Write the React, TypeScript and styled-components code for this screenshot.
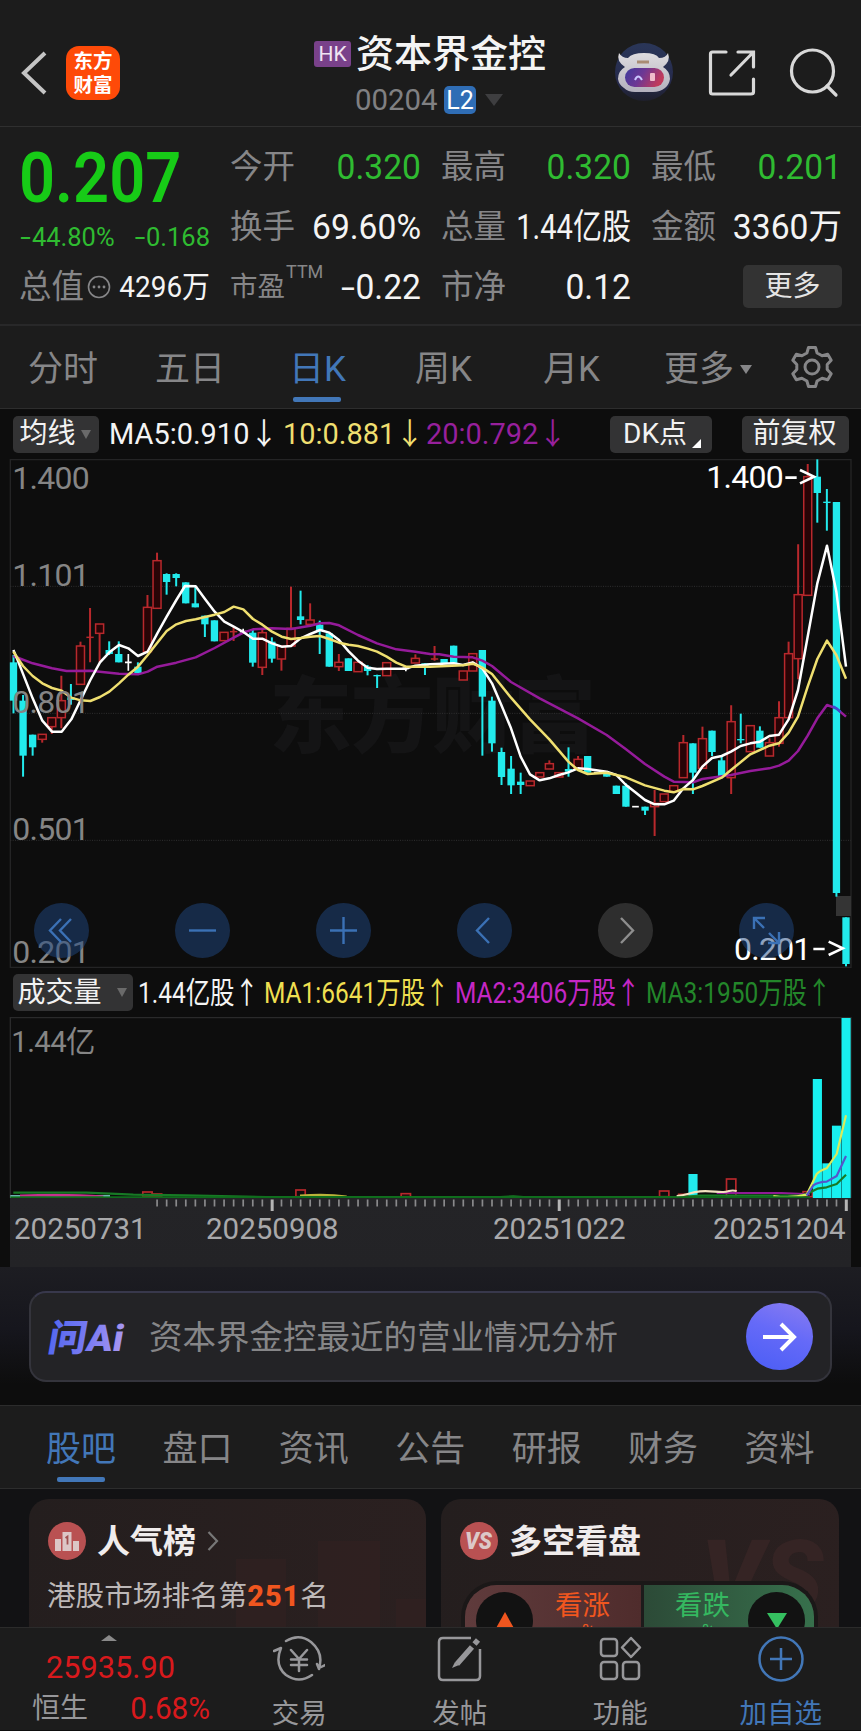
import React from "react";
import styled, { createGlobalStyle } from "styled-components";

const Global = createGlobalStyle`
  * { box-sizing: border-box; }
  html, body { margin: 0; padding: 0; background: #0d0d0d; }
  body { font-family: Roboto, "Noto Sans CJK SC", sans-serif; overflow: hidden; }
`;

const GREEN = "#17cb17";
const GREY = "#868688";
const CYAN = "#22eaec";
const RED = "#b8282c";
const BLUE = "#4277b8";

const Page = styled.div`
  width: 861px;
  height: 1731px;
  overflow: hidden;
  display: flex;
  flex-direction: column;
  background: #0d0d0d;
  color: #f4f4f4;
`;

/* Text drawn at a given width: the glyphs are narrowed horizontally */
const Fit = styled.span<{ $w?: number; $s?: number; $size: number; $color?: string; $weight?: number; $right?: boolean }>`
  display: flex;
  flex: none;
  justify-content: ${(p) => (p.$right ? "flex-end" : "flex-start")};
  width: ${(p) => (p.$w ? p.$w + "px" : "auto")};
  white-space: nowrap;
  line-height: 1;
  font-size: ${(p) => p.$size}px;
  font-weight: ${(p) => p.$weight ?? 400};
  color: ${(p) => p.$color ?? "inherit"};
  transform: scaleX(${(p) => p.$s ?? 1});
  transform-origin: ${(p) => (p.$right ? "right" : "left")} center;
`;
const Minus = styled.span`
  display: inline-block;
  transform: scaleX(1.5);
  margin: 0 3px;
`;

/* ---------- header ---------- */
const Header = styled.header`
  height: 127px;
  flex: none;
  display: flex;
  align-items: flex-start;
  background: #1c1c1c;
  border-bottom: 1px solid #2f2f2f;
  padding: 33px 20px 0 20px;
`;
const HeadLeft = styled.div`
  width: 294px;
  display: flex;
  gap: 18px;
  padding-top: 13px;
`;
const BrandMark = styled.div`
  width: 54px;
  height: 54px;
  border-radius: 13px;
  background: #fe4a08;
  color: #fff;
  display: flex;
  flex-direction: column;
  align-items: center;
  gap: 4px;
  font: 700 19.5px/20px "Noto Sans CJK SC", sans-serif;
  padding-top: 4px;
`;
const TitleBlock = styled.div`
  width: 290px;
`;
const TitleRow = styled.div`
  display: flex;
  align-items: center;
  gap: 5px;
  height: 40px;
  padding-top: 1px;
`;
const Market = styled.span`
  width: 37px;
  height: 26px;
  border-radius: 3px;
  background: #79418a;
  font-size: 21px;
  line-height: 27px;
  text-align: center;
  color: #efe4f2;
`;
const CodeRow = styled.div`
  display: flex;
  align-items: center;
  height: 30px;
  margin: 12px 0 0 41px;
`;
const Level = styled.span`
  width: 32px;
  height: 28px;
  margin: 0 9px 0 6px;
  border-radius: 5px;
  background: #2f6db5;
  font-size: 25px;
  line-height: 29px;
  text-align: center;
  color: #fff;
`;
const Down = styled.i<{ $w: number; $h: number; $c: string }>`
  flex: none;
  border-style: solid;
  border-color: ${(p) => p.$c} transparent transparent;
  border-width: ${(p) => `${p.$h}px ${p.$w / 2}px 0`};
`;
const HeadIcons = styled.div`
  display: flex;
  align-items: center;
  padding-top: 9px;
  gap: 33px;
  margin-left: 9px;
`;

/* ---------- quote ---------- */
const Quote = styled.section`
  height: 199px;
  flex: none;
  display: grid;
  grid-template-columns: 190px 190px 189px 190px;
  column-gap: 21px;
  padding: 10px 20px 8px;
  background: #1c1c1c;
  border-bottom: 2px solid #282829;
`;
const QuoteCol = styled.div`
  display: flex;
  flex-direction: column;
  margin-left: -1px;
`;
const Cell = styled.div`
  height: 60px;
  display: flex;
  align-items: center;
  justify-content: space-between;
`;
const PriceBox = styled.div`
  height: 80px;
  padding-top: 5px;
`;
const ChangeRow = styled.div`
  height: 40px;
  display: flex;
  align-items: center;
  justify-content: space-between;
`;
const Sup = styled.sup`
  font-size: 18px;
  line-height: 1;
  color: ${GREY};
  align-self: flex-start;
  margin: 6px auto 0 1px;
`;
const MoreButton = styled.button`
  width: 99px;
  height: 43px;
  margin: -2px 0 0 auto;
  border: 0;
  border-radius: 5px;
  background: #333;
  color: #e4e4e4;
  font: 400 28px/37px "Noto Sans CJK SC", sans-serif;
  padding: 0 0 4px;
`;

/* ---------- period tabs ---------- */
const Periods = styled.nav`
  height: 83px;
  flex: none;
  display: flex;
  align-items: stretch;
  background: #1c1c1c;
  border-bottom: 1px solid #2d2d2d;
  padding-left: 28px;
`;
const Tab = styled.div<{ $w: number; $on?: boolean }>`
  width: ${(p) => p.$w}px;
  display: flex;
  align-items: center;
  gap: 6px;
  padding-top: 4px;
  font-size: 35px;
  line-height: 1;
  white-space: nowrap;
  color: ${(p) => (p.$on ? BLUE : GREY)};
`;
const Settings = styled.div`
  display: flex;
  align-items: center;
`;
const TabLabel = styled.span<{ $on?: boolean }>`
  position: relative;
  &::after {
    content: "";
    display: ${(p) => (p.$on ? "block" : "none")};
    position: absolute;
    width: 48px;
    height: 5px;
    border-radius: 2px;
    background: ${BLUE};
    left: calc(50% - 24px);
    top: 45px;
  }
`;

/* ---------- legends and charts ---------- */
const Legend = styled.div<{ $h: number }>`
  height: ${(p) => p.$h}px;
  flex: none;
  display: flex;
  align-items: center;
  padding: 0 12px 0 13px;
`;
const Chip = styled.button<{ $w: number }>`
  width: ${(p) => p.$w}px;
  height: 37px;
  flex: none;
  display: flex;
  align-items: center;
  justify-content: center;
  gap: 5px;
  border: 0;
  border-radius: 5px;
  background: #333334;
  color: #f2f2f2;
  padding: 0 2px 0 0;
  font: 400 28px/1 Roboto, "Noto Sans CJK SC", sans-serif;
`;
const Corner = styled.i`
  align-self: flex-end;
  margin: 0 -4px 5px 0;
  border-style: solid;
  border-width: 0 0 9px 9px;
  border-color: transparent transparent #fff;
`;
const Space = styled.span<{ $w: number }>`
  flex: none;
  width: ${(p) => p.$w}px;
`;
const ChartBox = styled.div<{ $h: number }>`
  position: relative;
  height: ${(p) => p.$h}px;
  flex: none;
  svg { display: block; }
`;
const Tools = styled.div`
  position: absolute;
  left: 34px;
  top: 444px;
  display: flex;
  gap: 86px;
`;
const Tool = styled.div<{ $off?: boolean }>`
  width: 55px;
  height: 55px;
  border-radius: 50%;
  background: ${(p) => (p.$off ? "rgba(56,56,56,.78)" : "rgba(32,72,130,.5)")};
  color: ${(p) => (p.$off ? "#8e8e8e" : "#3b71b5")};
  display: grid;
  place-items: center;
`;
const Axis = styled.div`
  flex: none;
  height: 69px;
  margin: 0 10px;
  background: linear-gradient(#242427, #232326);
`;
const Dates = styled.div`
  display: flex;
  padding: 3px 0 0 4px;
`;

/* ---------- AI bar ---------- */
const AiArea = styled.section`
  height: 138px;
  flex: none;
  padding: 24px 29px 0;
  background: linear-gradient(#1d1d22, #16161d 45%, #0d0d0d 85%);
`;
const AiBar = styled.div`
  height: 91px;
  display: flex;
  align-items: center;
  padding: 0 17px 0 13px;
  border: 2px solid #34343c;
  border-top-color: #38384c;
  border-radius: 17px;
  background: #232326;
`;
const AiText = styled.span`
  flex: 1;
  margin: 3px 0 0 18px;
  font-size: 33.5px;
  line-height: 1;
  color: ${GREY};
  white-space: nowrap;
`;
const Go = styled.div`
  width: 67px;
  height: 67px;
  border-radius: 50%;
  display: grid;
  place-items: center;
  background: linear-gradient(20deg, #4a5df5, #656af8 55%, #8b7df0);
`;

/* ---------- content tabs and cards ---------- */
const Sections = styled(Periods)`
  height: 84px;
  border-top: 1px solid #2c2c2c;
  padding-left: 46px;
`;
const Cards = styled.section`
  height: 138px;
  flex: none;
  display: flex;
  gap: 15px;
  padding: 10px 22px 0 29px;
  background: #121214;
  overflow: hidden;
`;
const Card = styled.article<{ $w: number }>`
  position: relative;
  width: ${(p) => p.$w}px;
  height: 150px;
  flex: none;
  padding: 21px 18px 0 19px;
  border-radius: 20px 20px 0 0;
  background: linear-gradient(100deg, #241e1e, #2b2020);
`;
const CardHead = styled.div`
  display: flex;
  align-items: center;
  gap: 11px;
  height: 42px;
  font-size: 33px;
  font-weight: 700;
  line-height: 1;
  color: #f0ecec;
`;
const Rank = styled.p`
  position: relative;
  margin: 20px 0 0 -1px;
  font-size: 28.6px;
  line-height: 1;
  color: #bdb8b8;
  white-space: nowrap;
  b { color: #f0561f; font-size: 29px; letter-spacing: 1px; font-weight: 800; }
`;
const CardArt = styled.svg`
  position: absolute;
  right: 0;
  top: 0;
`;
const Vote = styled.div`
  position: relative;
  height: 70px;
  margin: 19px 3px 0 1px;
  border: 4px solid #1b1818;
  border-bottom: 0;
  border-radius: 36px 36px 0 0;
  overflow: hidden;
  display: flex;
`;
const Half = styled.div<{ $up?: boolean }>`
  flex: ${(p) => (p.$up ? "0 0 179px" : "1")};
  display: flex;
  justify-content: space-between;
  padding: ${(p) => (p.$up ? "7px 31px 0 11px" : "7px 9px 0 31px")};
  background: ${(p) => (p.$up ? "linear-gradient(90deg,#5f3b3c,#4f2c2c)" : "linear-gradient(90deg,#2c4a37,#37704c)")};
  color: ${(p) => (p.$up ? "#f0561f" : "#35b860")};
  ${(p) => (p.$up ? "border-right: 3px solid #1d1b1b;" : "")}
`;
const Dot = styled.span`
  width: 57px;
  height: 57px;
  border-radius: 50%;
  background: #121212;
  display: grid;
  place-items: center;
`;
const VoteText = styled.div`
  display: flex;
  flex-direction: column;
  align-items: center;
  gap: 2px;
  font-size: 27.5px;
  line-height: 28px;
  small { font-size: 18px; line-height: 18px; margin-left: 12px; }
`;

/* ---------- bottom bar ---------- */
const Bottom = styled.footer`
  height: 103px;
  flex: none;
  display: flex;
  background: #1c1c1c;
  border-top: 1px solid #2b2b2b;
`;
const Index = styled.div`
  width: 219px;
  display: flex;
  flex-direction: column;
  padding: 7px 9px 0 32px;
  color: #d8191c;
`;
const Up = styled.i`
  margin-left: 69px;
  width: 0;
  border-style: solid;
  border-color: transparent transparent #8a8a8a;
  border-width: 0 8.5px 6px;
`;
const IndexRow = styled.div`
  display: flex;
  justify-content: space-between;
  align-items: center;
  margin-top: 10px;
`;
const Action = styled.div<{ $on?: boolean }>`
  width: 160.5px;
  display: flex;
  flex-direction: column;
  align-items: center;
  padding-top: 7px;
  color: ${(p) => (p.$on ? BLUE : "#97979a")};
  font-size: 27.5px;
  line-height: 1;
  svg { margin-bottom: 17px; flex: none; }
`;

/* ---------- chart data ---------- */
/* [index, kind, high, bodyTop, bodyBottom, low]; vertical unit = 1/3 px */
type K = [number, "c" | "r" | "w", number, number, number, number];
const candles: K[] = [
  [0, "c", 615, 637, 752, 790], [1, "c", 735, 752, 917, 980], [2, "c", 854, 854, 892, 917], [3, "r", 853, 853, 868, 878],
  [4, "r", 803, 803, 830, 852], [5, "r", 677, 752, 803, 835], [6, "c", 702, 742, 750, 764], [7, "r", 575, 588, 703, 703],
  [8, "r", 474, 562, 562, 637], [9, "r", 522, 522, 550, 637], [10, "c", 574, 600, 612, 615], [11, "c", 574, 612, 637, 637],
  [12, "w", 612, 637, 637, 662], [13, "c", 637, 650, 672, 672], [14, "r", 435, 472, 605, 605], [15, "r", 308, 332, 475, 475],
  [16, "c", 370, 372, 396, 434], [17, "c", 370, 372, 384, 409], [18, "c", 397, 397, 460, 460], [19, "c", 409, 460, 472, 472],
  [20, "c", 497, 497, 523, 561], [21, "c", 511, 511, 574, 574], [22, "r", 547, 547, 572, 572], [23, "r", 530, 545, 545, 573],
  [24, "w", 536, 545, 545, 552], [25, "c", 538, 548, 638, 650], [26, "r", 535, 548, 652, 675], [27, "c", 562, 575, 626, 638],
  [28, "r", 588, 588, 627, 662], [29, "r", 410, 535, 588, 588], [30, "c", 422, 499, 510, 523], [31, "r", 460, 510, 523, 523],
  [32, "c", 512, 524, 543, 612], [33, "c", 550, 550, 650, 650], [34, "r", 612, 637, 650, 663], [35, "c", 625, 625, 663, 663],
  [36, "r", 637, 637, 665, 665], [37, "c", 645, 650, 663, 676], [38, "c", 674, 675, 677, 714], [39, "r", 638, 638, 677, 677],
  [41, "w", 648, 655, 655, 664], [42, "r", 613, 625, 639, 639], [43, "c", 640, 640, 650, 675], [44, "r", 588, 627, 627, 632],
  [45, "c", 627, 627, 640, 640], [46, "c", 587, 587, 640, 640], [47, "r", 663, 663, 690, 690], [48, "r", 611, 611, 663, 663],
  [49, "c", 600, 600, 740, 917], [50, "c", 740, 752, 880, 905], [51, "c", 893, 906, 981, 1005], [52, "c", 918, 956, 1006, 1032],
  [53, "c", 968, 995, 1005, 1032], [54, "r", 993, 993, 1007, 1007], [55, "r", 968, 968, 981, 981], [56, "r", 931, 941, 957, 957],
  [57, "r", 968, 968, 981, 981], [58, "c", 892, 957, 965, 980], [59, "r", 918, 928, 957, 957], [60, "c", 918, 918, 968, 968],
  [61, "w", 968, 968, 968, 968], [62, "c", 968, 968, 980, 980], [63, "c", 1007, 1007, 1032, 1032], [64, "c", 1000, 1007, 1070, 1070],
  [65, "w", 1070, 1070, 1070, 1070], [66, "c", 1070, 1070, 1082, 1095], [67, "r", 1020, 1060, 1070, 1158], [68, "r", 1032, 1032, 1055, 1055],
  [69, "r", 1007, 1007, 1025, 1025], [70, "r", 855, 878, 983, 983], [71, "c", 880, 880, 968, 1032], [72, "r", 830, 866, 955, 955],
  [73, "c", 842, 842, 906, 918], [74, "c", 920, 931, 980, 980], [75, "r", 766, 815, 983, 1032], [76, "c", 791, 867, 868, 880],
  [77, "r", 827, 827, 905, 905], [78, "c", 829, 842, 893, 893], [79, "r", 865, 878, 918, 918], [80, "r", 754, 803, 880, 890],
  [81, "r", 575, 611, 803, 803], [82, "r", 283, 434, 626, 688], [83, "r", 42, 80, 436, 436], [84, "c", 28, 80, 129, 218],
  [85, "c", 117, 155, 157, 242], [86, "c", 156, 156, 1329, 1340], [87, "c", 1402, 1402, 1542, 1549],
];
const cx = (i: number) => 40.5 + 28.707 * i;

const HALF = 1290;
const join = (a: number[][], b: number[][]) =>
  [...a, ...b.map(([x, y]) => [x + HALF, y])].map((p) => p.join(",")).join(" ");

const ma5 = join(
  [[40, 600], [52, 628], [98, 745], [127, 812], [156, 845], [185, 845], [214, 808], [242, 750], [271, 690], [300, 637], [328, 607], [357, 585], [385, 595], [414, 618], [443, 605], [472, 550], [500, 500], [529, 450], [555, 408], [587, 409], [615, 447], [644, 485], [673, 515], [701, 530], [730, 546], [759, 566], [787, 566], [816, 580], [845, 590], [873, 588], [902, 565], [931, 552], [960, 540], [988, 548], [1017, 570], [1046, 604], [1074, 632], [1103, 653], [1131, 657], [1160, 656], [1218, 656], [1246, 647]],
  [[0, 643], [71, 640], [99, 645], [128, 637], [157, 655], [186, 700], [214, 765], [243, 835], [272, 920], [300, 973], [329, 991], [358, 985], [387, 975], [415, 967], [444, 955], [473, 957], [530, 965], [559, 975], [588, 1005], [616, 1027], [645, 1050], [674, 1063], [703, 1063], [731, 1052], [760, 1015], [789, 990], [817, 950], [846, 924], [875, 918], [903, 905], [932, 888], [961, 880], [990, 875], [1018, 858], [1047, 854], [1076, 808], [1104, 720], [1133, 560], [1162, 400], [1191, 287], [1219, 425], [1248, 650]]
);
const ma10 = join(
  [[40, 605], [69, 648], [98, 678], [127, 700], [156, 714], [185, 722], [214, 743], [242, 751], [271, 753], [300, 741], [328, 725], [357, 700], [385, 674], [414, 650], [443, 615], [472, 578], [500, 543], [529, 523], [558, 513], [587, 508], [644, 494], [673, 486], [701, 470], [730, 478], [759, 507], [787, 524], [816, 545], [845, 560], [873, 567], [902, 564], [931, 560], [960, 558], [988, 567], [1017, 578], [1046, 584], [1074, 588], [1103, 596], [1131, 605], [1160, 620], [1189, 638], [1218, 650]],
  [[0, 650], [99, 646], [128, 641], [157, 653], [186, 672], [243, 743], [300, 808], [358, 868], [415, 935], [444, 960], [473, 972], [530, 968], [588, 982], [645, 1006], [703, 1022], [731, 1027], [760, 1017], [789, 1018], [817, 1008], [875, 983], [903, 960], [961, 913], [1018, 887], [1047, 880], [1076, 848], [1104, 800], [1133, 710], [1162, 627], [1191, 572], [1219, 615], [1248, 686]]
);
const ma20 = join(
  [[40, 618], [98, 640], [156, 655], [200, 663], [271, 662], [357, 671], [414, 673], [443, 665], [472, 650], [529, 638], [587, 622], [644, 594], [701, 563], [730, 548], [759, 538], [816, 535], [873, 537], [931, 527], [960, 520], [988, 519], [1017, 526], [1074, 555], [1131, 580], [1189, 598], [1246, 605]],
  [[0, 612], [28, 613], [71, 620], [128, 622], [157, 632], [186, 648], [243, 696], [329, 745], [444, 805], [530, 855], [588, 898], [645, 942], [703, 980], [731, 995], [789, 997], [817, 987], [903, 975], [961, 963], [1018, 955], [1047, 947], [1076, 932], [1104, 903], [1133, 857], [1162, 805], [1191, 765], [1219, 775], [1248, 800]]
);

function Candle({ k }: { k: K }) {
  const [i, kind, hi, top, bot, lo] = k;
  const x = cx(i);
  if (kind === "w")
    return <path d={`M${x - 10} ${top}h20M${x} ${hi}V${lo}`} stroke="#fff" strokeWidth="5" fill="none" />;
  if (kind === "r")
    return (
      <g stroke={RED} strokeWidth="4.5" fill="none">
        <path d={`M${x} ${hi}V${top}M${x} ${bot}V${lo}`} strokeWidth="6" />
        {bot - top < 3 ? <path d={`M${x - 11} ${top}h22`} /> : <rect x={x - 12} y={top} width="24" height={bot - top} fill="#280406" />}
      </g>
    );
  return (
    <g fill={CYAN}>
      <rect x={x - 3} y={hi} width="6" height={lo - hi} />
      <rect x={x - 11} y={top} width="22" height={Math.max(bot - top, 4)} />
    </g>
  );
}

function PriceChart() {
  return (
    <svg width="861" height="509" viewBox="0 27 2583 1527">
      <g fontFamily='"Noto Sans CJK SC", sans-serif' fontWeight="900" fill="#141415">
        <text x="808" y="887" fontSize="248" textLength="980">东方财富</text>
      </g>
      <path d="M31 29H2553V1552H31Z" fill="none" stroke="#242425" strokeWidth="4" />
      <path d="M31 409H2553M31 790H2553M31 1171H2553" stroke="#303031" strokeWidth="3" strokeDasharray="3 4" />
      <rect x="2508" y="1338" width="45" height="60" fill="#343434" />
      {candles.map((k) => <Candle key={k[0]} k={k} />)}
      <g fill="none" strokeWidth="7.5" strokeLinejoin="round">
        <polyline points={ma20} stroke="#951b9a" />
        <polyline points={ma5} stroke="#fff" />
        <polyline points={ma10} stroke="#efdf70" />
        <path d="M2499 769L2509 775L2522 786" stroke="#3b4fd0" />
      </g>
      <g fontFamily="Roboto, sans-serif" fontSize="96" fill="#858585">
        {([["1.400", 118], ["1.101", 408], ["0.801", 789], ["0.501", 1170], ["0.201", 1540]] as [string, number][]).map(([t, y]) => (
          <text key={t} x="37" y={y} textLength="232">{t}</text>
        ))}
      </g>
      <g fontFamily="Roboto, sans-serif" fontSize="96" fill="#fff" stroke="none">
        <text x="2119" y="114" textLength="232">1.400</text>
        <text x="2202" y="1529" textLength="232">0.201</text>
      </g>
      <path d="M2356 83h34M2400 60l42 20l-42 20M2440 1497h34M2486 1475l42 20l-42 20" stroke="#fff" strokeWidth="8" fill="none" />
    </svg>
  );
}

const volBars: [number, number, string][] = [[71, 522, CYAN], [84, 237, "#18f0f0"], [85, 490, "#18f0f0"], [86, 377, "#18f0f0"], [87, 54, "#18f0f0"]];
const volHollow = [[14, 576], [15, 582], [30, 570], [41, 581], [68, 573], [70, 583], [75, 537], [83, 575]];

function VolumeChart() {
  return (
    <svg width="861" height="181" viewBox="0 51 2583 543">
      <path d="M31 600V53H2553V600" fill="none" stroke="#2a2a2b" strokeWidth="4" />
      {volHollow.map(([i, y]) => (
        <rect key={i} x={cx(i) - 14} y={y} width="28" height={590 - y} fill="none" stroke={RED} strokeWidth="5" />
      ))}
      {volBars.map(([i, y, c]) => (
        <rect key={i} x={cx(i) - 13.5} y={y} width="27.5" height={594 - y} fill={c} />
      ))}
      <g fill="none" strokeWidth="6.5" strokeLinejoin="round">
        <path d="M31 590H330" stroke="#8fe8ea" strokeWidth="8" />
        <path d="M60 588Q200 582 310 591" stroke="#c8308e" strokeWidth="9" />
        <path d="M900 587Q980 581 1040 590" stroke="#b9b23a" />
        <path d="M2150 579H2345L2430 583" stroke="#8f1b94" />
        <path d="M40 578H260L400 584L560 586L800 591H1500L1540 589L1570 591H2040L2100 587H2400L2420 582L2452 566L2480 562L2510 552L2538 524" stroke="#177a25" />
        <path d="M2030 588C2060 586 2070 577 2100 574S2150 577 2170 576S2190 568 2210 573" stroke="#f3e3c0" />
        <path d="M2320 588C2350 593 2390 592 2420 584L2450 522Q2460 512 2480 505L2510 462L2538 346" stroke="#d9ec5c" />
        <path d="M2420 586L2440 556Q2455 546 2480 545L2510 528L2538 468" stroke="#5555cc" />
      </g>
      <path d="M31 592H2430" stroke="#0f6b1c" strokeWidth="6" />
      <text x="34" y="156" fontSize="88" textLength="252" fill="#858585" fontFamily='Roboto, "Noto Sans CJK SC", sans-serif'>1.44亿</text>
    </svg>
  );
}

function Ticks() {
  return (
    <svg width="841" height="14" viewBox="0 0 841 14" display="block">
      {Array.from({ length: 73 }, (_, n) => {
        const i = n + 15;
        const big = i === 27 || i === 57 || i === 87;
        return <rect key={i} x={cx(i) / 3 - 10 - (big ? 1.2 : 0.8)} y="1.5" width={big ? 3 : 1.7} height={big ? 11.5 : 7} fill={big ? "#b5b5b5" : "#8a8a8c"} />;
      })}
    </svg>
  );
}

/* ---------- drawings ---------- */
const Robot = () => (
  <svg width="62" height="62" viewBox="0 0 62 62">
    <defs>
      <linearGradient id="halo" x2="0" y2="1"><stop stopColor="#2a3658" /><stop offset=".7" stopColor="#262a4c" /><stop offset="1" stopColor="#1e1f2b" /></linearGradient>
      <linearGradient id="visor" x2="1" y1="0" y2=".3"><stop stopColor="#3f3a9c" /><stop offset=".5" stopColor="#6d3794" /><stop offset="1" stopColor="#c03a5c" /></linearGradient>
      <linearGradient id="shell" x2="0" y2="1"><stop stopColor="#dedcdf" /><stop offset="1" stopColor="#b3b0bd" /></linearGradient>
    </defs>
    <circle cx="31" cy="30" r="29" fill="url(#halo)" />
    <path d="M12 25Q3 19 6 11Q9 16 15 16Q19 11 31 11T46 16Q53 16 55 11Q58 19 50 25Q57 29 57 37Q56 43 52 46Q47 50 40 50H22Q15 50 11 46Q6 43 5 37Q5 29 12 25Z" fill="url(#shell)" />
    <rect x="12" y="26" width="39" height="19" rx="9.500" fill="url(#visor)" />
    <path d="M22 38Q25 31 29 38" stroke="#c9c5ff" strokeWidth="2" fill="none" />
    <rect x="37" y="31" width="5" height="8" rx="1" fill="#f0bccb" />
    <path d="M24 20h12" stroke="#a98c74" strokeWidth="3" />
  </svg>
);
const Share = () => (
  <svg width="48" height="48" viewBox="0 0 48 48" fill="none" stroke="#d8d8d8" strokeWidth="3.2" strokeLinecap="round">
    <path d="M18 3H4.500Q2.500 3 2.500 5V43Q2.500 45 4.500 45H43Q45.500 45 45.500 43V30" />
    <path d="M30 3H45.500V18M45 3.500L23 26" />
  </svg>
);
const Search = () => (
  <svg width="50" height="50" viewBox="0 0 50 50" fill="none" stroke="#d8d8d8" strokeWidth="3.2" strokeLinecap="round">
    <circle cx="23.500" cy="23" r="21" /><path d="M38 38L47 47" />
  </svg>
);
const Gear = () => (
  <svg width="44" height="44" viewBox="0 0 44 44" fill="none" stroke={GREY} strokeWidth="3" strokeLinejoin="round">
    <path d="M18.500 2.500h7l1.600 5.500 5 2.800 5.600-1.500 3.500 6-4 4.200v5l4 4.200-3.500 6-5.600-1.500-5 2.800-1.600 5.500h-7l-1.600-5.500-5-2.800-5.600 1.500-3.500-6 4-4.200v-5l-4-4.200 3.500-6 5.600 1.500 5-2.800z" />
    <circle cx="22" cy="22" r="7" />
  </svg>
);
const ToolIcon = ({ d }: { d: string }) => (
  <svg width="31" height="31" viewBox="0 0 31 31" fill="none" stroke="currentColor" strokeWidth="2.400"><path d={d} /></svg>
);
const AiLogo = () => (
  <svg width="87" height="46" viewBox="0 0 87 46">
    <defs><linearGradient id="ai"><stop stopColor="#5468f0" /><stop offset=".55" stopColor="#7b7cf2" /><stop offset="1" stopColor="#a897f0" /></linearGradient></defs>
    <text x="9" y="37" fontFamily='Roboto, "Noto Sans CJK SC", sans-serif' fontWeight="900" fontSize="37" fill="url(#ai)" textLength="75" lengthAdjust="spacingAndGlyphs" transform="skewX(-10)">问Ai</text>
  </svg>
);

const cols = [
  [["今开", "0.320", 1], ["换手", "69.60%", 0]],
  [["最高", "0.320", 1], ["总量", "1.44亿股", 0], ["市净", "0.12", 0]],
  [["最低", "0.201", 1], ["金额", "3360万", 0]],
] as [string, string, number][][];

function QuoteCell({ c }: { c: [string, string, number] }) {
  const scale = c[1].includes("亿") ? 0.83 : 0.96;
  return (
    <Cell>
      <Fit $size={32.5} $color={GREY}>{c[0]}</Fit>
      <Fit $size={35} $s={scale} $w={115} $right $color={c[2] ? "#2fbb31" : "#f4f4f4"}>{c[1]}</Fit>
    </Cell>
  );
}

export default function App() {
  return (
    <Page>
      <Global />
      <Header>
        <HeadLeft>
          <svg width="28" height="54" viewBox="0 0 28 54" fill="none" stroke="#c4c4c4" strokeWidth="4"><path d="M25 7L4 27L25 47" /></svg>
          <BrandMark><span>东方</span><span>财富</span></BrandMark>
        </HeadLeft>
        <TitleBlock>
          <TitleRow><Market>HK</Market><Fit $size={38} $weight={500}>资本界金控</Fit></TitleRow>
          <CodeRow>
            <Fit $size={30} $w={83} $s={0.98} $color="#808082">00204</Fit>
            <Level>L2</Level>
            <Down $w={18} $h={12} $c="#3e3e40" />
          </CodeRow>
        </TitleBlock>
        <HeadIcons><Robot /><Share /><Search /></HeadIcons>
      </Header>

      <Quote>
        <QuoteCol>
          <PriceBox><Fit $size={71} $s={0.89} $weight={600} $color={GREEN}>0.207</Fit></PriceBox>
          <ChangeRow>
            <Fit $size={26} $s={0.98} $w={108} $color="#2fbb31"><Minus>-</Minus>44.80%</Fit>
            <Fit $size={26} $s={0.98} $w={78} $right $color="#2fbb31"><Minus>-</Minus>0.168</Fit>
          </ChangeRow>
          <Cell>
            <Fit $size={32.5} $color={GREY}>总值</Fit>
            <svg width="24" height="24" viewBox="0 0 24 24" fill={GREY}><circle cx="12" cy="12" r="10.500" fill="none" stroke={GREY} strokeWidth="1.600" /><circle cx="7" cy="12" r="1.400" /><circle cx="12" cy="12" r="1.400" /><circle cx="17" cy="12" r="1.400" /></svg>
            <Fit $size={30} $s={0.93} $w={96} $right>4296万</Fit>
          </Cell>
        </QuoteCol>
        {cols.map((col, n) => (
          <QuoteCol key={n}>
            {col.map((c) => <QuoteCell key={c[0]} c={c} />)}
            {n === 0 && (
              <Cell>
                <Fit $size={27.5} $color={GREY}>市盈</Fit><Sup>TTM</Sup>
                <Fit $size={35} $s={0.96} $right><Minus>-</Minus>0.22</Fit>
              </Cell>
            )}
            {n === 2 && <Cell><MoreButton>更多</MoreButton></Cell>}
          </QuoteCol>
        ))}
      </Quote>

      <Periods>
        <Tab $w={127}>分时</Tab>
        <Tab $w={134}>五日</Tab>
        <Tab $w={126} $on><TabLabel $on>日K</TabLabel></Tab>
        <Tab $w={128}>周K</Tab>
        <Tab $w={121}>月K</Tab>
        <Tab $w={126}>更多<Down $w={12} $h={9} $c={GREY} /></Tab>
        <Settings><Gear /></Settings>
      </Periods>

      <Legend $h={50}>
        <Chip $w={86}>均线<Down $w={11} $h={9} $c="#6a6a6a" /></Chip>
        <Space $w={10} />
        <Fit $size={30} $w={174} $s={0.965}>MA5:0.910↓</Fit>
        <Fit $size={30} $w={143} $s={0.965} $color="#efdf70">10:0.881↓</Fit>
        <Fit $size={30} $w={184} $s={0.965} $color="#97209c">20:0.792↓</Fit>
        <Chip $w={102}>DK点<Corner /></Chip>
        <Space $w={30} />
        <Chip $w={107}>前复权</Chip>
      </Legend>

      <ChartBox $h={509}>
        <PriceChart />
        <Tools>
          <Tool><ToolIcon d="M15 4L4 15.500L15 27M25 4L14 15.500L25 27" /></Tool>
          <Tool><ToolIcon d="M2 15.500H29" /></Tool>
          <Tool><ToolIcon d="M2 15.500H29M15.500 2V29" /></Tool>
          <Tool><ToolIcon d="M20 3L8 15.500L20 28" /></Tool>
          <Tool $off><ToolIcon d="M11 3L23 15.500L11 28" /></Tool>
          <Tool><ToolIcon d="M3 14V3H14M3 3L13 13M28 17V28H17M28 28L18 18" /></Tool>
        </Tools>
      </ChartBox>

      <Legend $h={49}>
        <Chip $w={120}>成交量<Space $w={5} /><Down $w={11} $h={9} $c="#6a6a6a" /></Chip>
        <Space $w={5} />
        <Fit $size={30} $w={126} $s={0.815}>1.44亿股↑</Fit>
        <Fit $size={30} $w={191} $s={0.815} $color="#efdf50">MA1:6641万股↑</Fit>
        <Fit $size={30} $w={191} $s={0.815} $color="#c527c5">MA2:3406万股↑</Fit>
        <Fit $size={30} $w={180} $s={0.815} $color="#23862a">MA3:1950万股↑</Fit>
      </Legend>

      <ChartBox $h={181}><VolumeChart /></ChartBox>
      <Axis>
        <Ticks />
        <Dates>
          {["20250731", "20250908", "20251022", "20251204"].map((d, n) => (
            <Fit key={d} $size={29.5} $color="#a9a9ab" $w={[192, 287, 220, 133][n]}>{d}</Fit>
          ))}
        </Dates>
      </Axis>

      <AiArea>
        <AiBar>
          <AiLogo />
          <AiText>资本界金控最近的营业情况分析</AiText>
          <Go><svg width="34" height="30" viewBox="0 0 34 30" fill="none" stroke="#fff" strokeWidth="4"><path d="M0 15H31M18 2L31 15L18 28" /></svg></Go>
        </AiBar>
      </AiArea>

      <Sections>
        {["股吧", "盘口", "资讯", "公告", "研报", "财务", "资料"].map((t, n) => (
          <Tab key={t} $w={116.6} $on={n === 0}><TabLabel $on={n === 0}>{t}</TabLabel></Tab>
        ))}
      </Sections>

      <Cards>
        <Card $w={397}>
          <CardArt width="220" height="150" viewBox="0 0 220 150" fill="#352222"><path d="M112 42h62v108h-62zM30 60h50v90H30zM190 100h30v50h-30z" opacity=".45" /></CardArt>
          <CardHead>
            <svg width="38" height="38" viewBox="0 0 38 38"><circle cx="19" cy="19" r="19" fill="#b95152" /><path d="M7 17h6v12H7zM14.500 10h9v19h-9zM25 19h6v10h-6z" fill="#dcc6c6" /><path d="M17.500 16l2-1.500v8" stroke="#a05050" strokeWidth="1.800" fill="none" /></svg>
            <span>人气榜</span>
            <svg width="12" height="20" viewBox="0 0 12 20" fill="none" stroke="#777" strokeWidth="2.200"><path d="M1.500 1L10 10L1.500 19" /></svg>
          </CardHead>
          <Rank>港股市场排名第<b>251</b>名</Rank>
        </Card>
        <Card $w={398}>
          <CardArt width="200" height="150" viewBox="0 0 200 150"><text x="62" y="112" fontFamily="Roboto, sans-serif" fontWeight="900" fontStyle="italic" fontSize="100" fill="#352424" textLength="122" lengthAdjust="spacingAndGlyphs">VS</text></CardArt>
          <CardHead>
            <svg width="38" height="38" viewBox="0 0 38 38"><circle cx="19" cy="19" r="19" fill="#b95152" /><text x="5" y="26.500" fontFamily="Roboto, sans-serif" fontWeight="900" fontStyle="italic" fontSize="23" fill="#dcc8c8" textLength="27" lengthAdjust="spacingAndGlyphs">VS</text></svg>
            <span>多空看盘</span>
          </CardHead>
          <Vote>
            <Half $up><Dot><svg width="20" height="18" viewBox="0 0 20 18"><path d="M10 0L20 18H0Z" fill="#f0561f" /></svg></Dot><VoteText>看涨<small>%</small></VoteText></Half>
            <Half><VoteText>看跌<small>%</small></VoteText><Dot><svg width="20" height="16" viewBox="0 0 20 16"><path d="M10 16L0 0H20Z" fill="#35c060" /></svg></Dot></Half>
          </Vote>
        </Card>
      </Cards>

      <Bottom>
        <Index>
          <Up />
          <IndexRow><Space $w={14} /><Fit $size={32} $w={164} $s={0.96}>25935.90</Fit></IndexRow>
          <IndexRow><Fit $size={28} $color="#97979a">恒生</Fit><Fit $size={31} $s={0.96} $right>0.68%</Fit></IndexRow>
        </Index>
        <Action>
          <svg width="52" height="48" viewBox="0 0 52 48" fill="none" stroke="currentColor" strokeWidth="2.500" strokeLinecap="round" strokeLinejoin="round"><path d="M13 6Q26 -2 38 7Q51 18 46 33L52 30M46 34L44 29M1 16L8 13Q1 30 13 40Q26 49 39 40M18 15L26 24L34 15M26 24V36M18 24.500H34M18 30H34" /></svg>
          交易
        </Action>
        <Action>
          <svg width="46" height="48" viewBox="0 0 46 48" fill="none" stroke="currentColor" strokeWidth="2.500"><path d="M34 3H6Q2 3 2 7V41Q2 45 6 45H39Q43 45 43 41V14" /><path d="M20 29L35 12M37.500 9L41 5" strokeWidth="5.500" /><path d="M15 33L22 30L18 27Z" fill="currentColor" stroke="none" /></svg>
          发帖
        </Action>
        <Action>
          <svg width="44" height="48" viewBox="0 0 44 48" fill="none" stroke="currentColor" strokeWidth="2.500"><rect x="3" y="4" width="16" height="17" rx="3" /><rect x="3" y="27" width="16" height="17" rx="3" /><rect x="25" y="27" width="16" height="17" rx="3" /><path d="M33 3L42 12.500L33 22L24 12.500Z" strokeLinejoin="round" /></svg>
          功能
        </Action>
        <Action $on>
          <svg width="48" height="48" viewBox="0 0 48 48" fill="none" stroke="currentColor" strokeWidth="2.500"><circle cx="24" cy="24" r="21.500" /><path d="M13 24H35M24 13V35" /></svg>
          加自选
        </Action>
      </Bottom>
    </Page>
  );
}
